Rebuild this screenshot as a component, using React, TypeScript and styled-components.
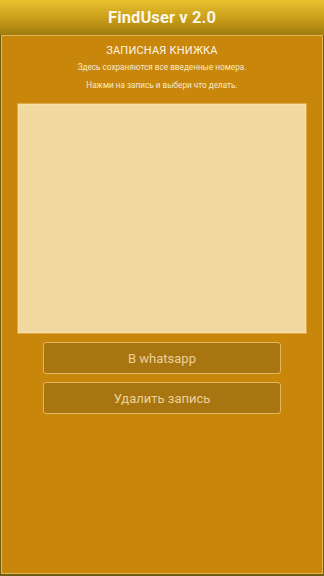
import React from "react";
import styled, { createGlobalStyle } from "styled-components";

const Global = createGlobalStyle`
  html, body { margin: 0; padding: 0; }
  body { font-family: Roboto, "Noto Sans", "Liberation Sans", sans-serif; }
`;

const Page = styled.div`
  width: 324px;
  height: 576px;
  display: flex;
  flex-direction: column;
  background: #6c5c14;
  overflow: hidden;
`;

const Header = styled.header`
  height: 35px;
  flex: none;
  display: flex;
  align-items: center;
  justify-content: center;
  background: linear-gradient(to bottom, #e8c22e 0%, #c89c18 55%, #9e7c0e 100%);
  color: #fbf6e6;
  font-family: Roboto, "Liberation Sans", sans-serif;
  font-weight: 700;
  font-size: 16.5px;
  letter-spacing: 0.1px;
`;

const Panel = styled.main`
  flex: 1;
  margin: 0 1px 2px 1px;
  border: 1px solid #e6b452;
  background: #c8860a;
  display: flex;
  flex-direction: column;
  align-items: center;
  padding-top: 8px;
`;

const Title = styled.h1`
  margin: 0;
  font-size: 11px;
  font-weight: 400;
  line-height: 14px;
  color: #fdf5e6;
  letter-spacing: 0.2px;
`;

const Note = styled.p<{ $top: number }>`
  margin: ${(p) => p.$top}px 0 0 0;
  font-size: 8.2px;
  line-height: 10px;
  color: #f7e9cc;
`;

const Records = styled.div`
  margin-top: 14px;
  width: 286px;
  height: 227px;
  background: #f2d99f;
  border: 1px solid #f7e0a8;
  box-shadow: 0 0 0 1px #dcaa4c;
`;

const Actions = styled.div`
  margin-top: 9px;
  display: flex;
  flex-direction: column;
  gap: 8px;
`;

const Button = styled.button`
  width: 238px;
  height: 32px;
  box-sizing: border-box;
  border: 1px solid #e4b65a;
  border-radius: 3px;
  background: #a97510;
  color: #ecd09a;
  font-family: Roboto, "Liberation Sans", sans-serif;
  font-size: 13px;
  padding: 0;
  display: flex;
  align-items: center;
  justify-content: center;
`;

export default function App() {
  return (
    <>
      <Global />
      <Page>
        <Header>FindUser v 2.0</Header>
        <Panel>
          <Title>ЗАПИСНАЯ КНИЖКА</Title>
          <Note $top={4}>Здесь сохраняются все введенные номера.</Note>
          <Note $top={8}>Нажми на запись и выбери что делать.</Note>
          <Records />
          <Actions>
            <Button>В whatsapp</Button>
            <Button>Удалить запись</Button>
          </Actions>
        </Panel>
      </Page>
    </>
  );
}
